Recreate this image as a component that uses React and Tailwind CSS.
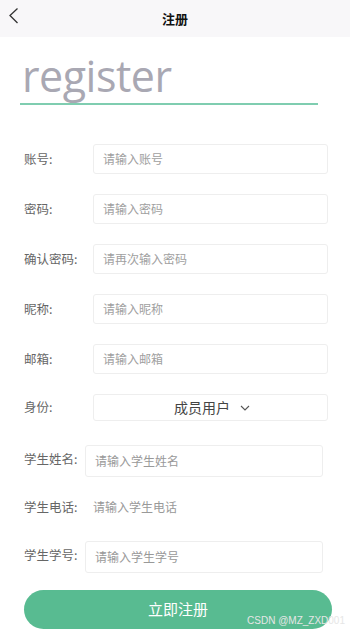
import React from "react";

const cjk = { fontFamily: '"Noto Sans CJK SC", "Noto Sans", sans-serif' };

function Row({ label, placeholder }) {
  return (
    <div className="flex items-center h-[30px]">
      <div className="w-[93px] shrink-0 whitespace-nowrap pl-[24px] text-[12.5px] text-[#666]">{label}</div>
      <div className="w-[235px] shrink-0 h-[30px] border border-[#eeeeee] rounded-[3px] flex items-center pl-[9px] text-[12px] text-[#a0a0a0]">
        {placeholder}
      </div>
    </div>
  );
}

function Row2({ label, placeholder, box = true }) {
  return (
    <div className="flex items-start">
      <div className="w-[85px] shrink-0 whitespace-nowrap pl-[24px] pt-[5px] text-[12.5px] text-[#666]">{label}</div>
      {box ? (
        <div className="w-[238px] shrink-0 h-[32px] border border-[#eeeeee] rounded-[3px] flex items-center pl-[9px] text-[12px] text-[#999]">
          {placeholder}
        </div>
      ) : (
        <div className="h-[32px] flex items-start pt-[5px] pl-[8px] text-[12px] text-[#999]">{placeholder}</div>
      )}
    </div>
  );
}

export default function App() {
  return (
    <div className="relative w-[350px] h-[632px] overflow-hidden bg-white" style={cjk}>
      <div className="h-[37px] bg-[#f8f7f9] flex items-center relative">
        <svg className="absolute left-[8px] top-[7px]" width="12" height="18" viewBox="0 0 12 18" fill="none">
          <path d="M9.5 1.5 L2 8.5 L9.5 16" stroke="#333" strokeWidth="1.3" />
        </svg>
        <div className="w-full text-center text-[13px] font-bold text-[#111]">注册</div>
      </div>

      <div className="mt-[13px] ml-[20px] w-[298px] border-b-2 border-[#7fcdb0] h-[55px] flex items-end">
        <span
          className="pl-[2px] text-[43px] leading-none text-[#a9a8b3] mb-[6px] tracking-[-0.5px]"
          style={{ fontFamily: '"Open Sans", sans-serif' }}
        >
          register
        </span>
      </div>

      <div className="mt-[39px] flex flex-col gap-[20px]">
        <Row label="账号:" placeholder="请输入账号" />
        <Row label="密码:" placeholder="请输入密码" />
        <Row label="确认密码:" placeholder="请再次输入密码" />
        <Row label="昵称:" placeholder="请输入昵称" />
        <Row label="邮箱:" placeholder="请输入邮箱" />
        <div className="flex items-center h-[27px]">
          <div className="w-[93px] shrink-0 whitespace-nowrap pl-[24px] text-[12.5px] text-[#666]">身份:</div>
          <div className="w-[235px] shrink-0 h-[27px] border border-[#eeeeee] rounded-[3px] flex items-center justify-center gap-[10px] text-[14px] text-[#444]">
            <span className="ml-[3px]">成员用户</span>
            <svg width="10" height="6" viewBox="0 0 10 6" fill="none">
              <path d="M1 1 L5 5 L9 1" stroke="#555" strokeWidth="1.1" />
            </svg>
          </div>
        </div>
      </div>

      <div className="mt-[24px] flex flex-col gap-[16px]">
        <Row2 label="学生姓名:" placeholder="请输入学生姓名" />
        <Row2 label="学生电话:" placeholder="请输入学生电话" box={false} />
        <Row2 label="学生学号:" placeholder="请输入学生学号" />
      </div>

      <div className="mt-[17px] ml-[24px] w-[308px] h-[39px] rounded-full bg-[#58bb91] flex items-center justify-center text-white text-[15px]">
        立即注册
      </div>

      <div
        className="absolute right-[5px] bottom-[6px] text-[10px] text-[#e6e6e6] leading-none"
        style={{ fontFamily: '"Liberation Sans", sans-serif' }}
      >
        CSDN @MZ_ZXD001
      </div>
    </div>
  );
}
